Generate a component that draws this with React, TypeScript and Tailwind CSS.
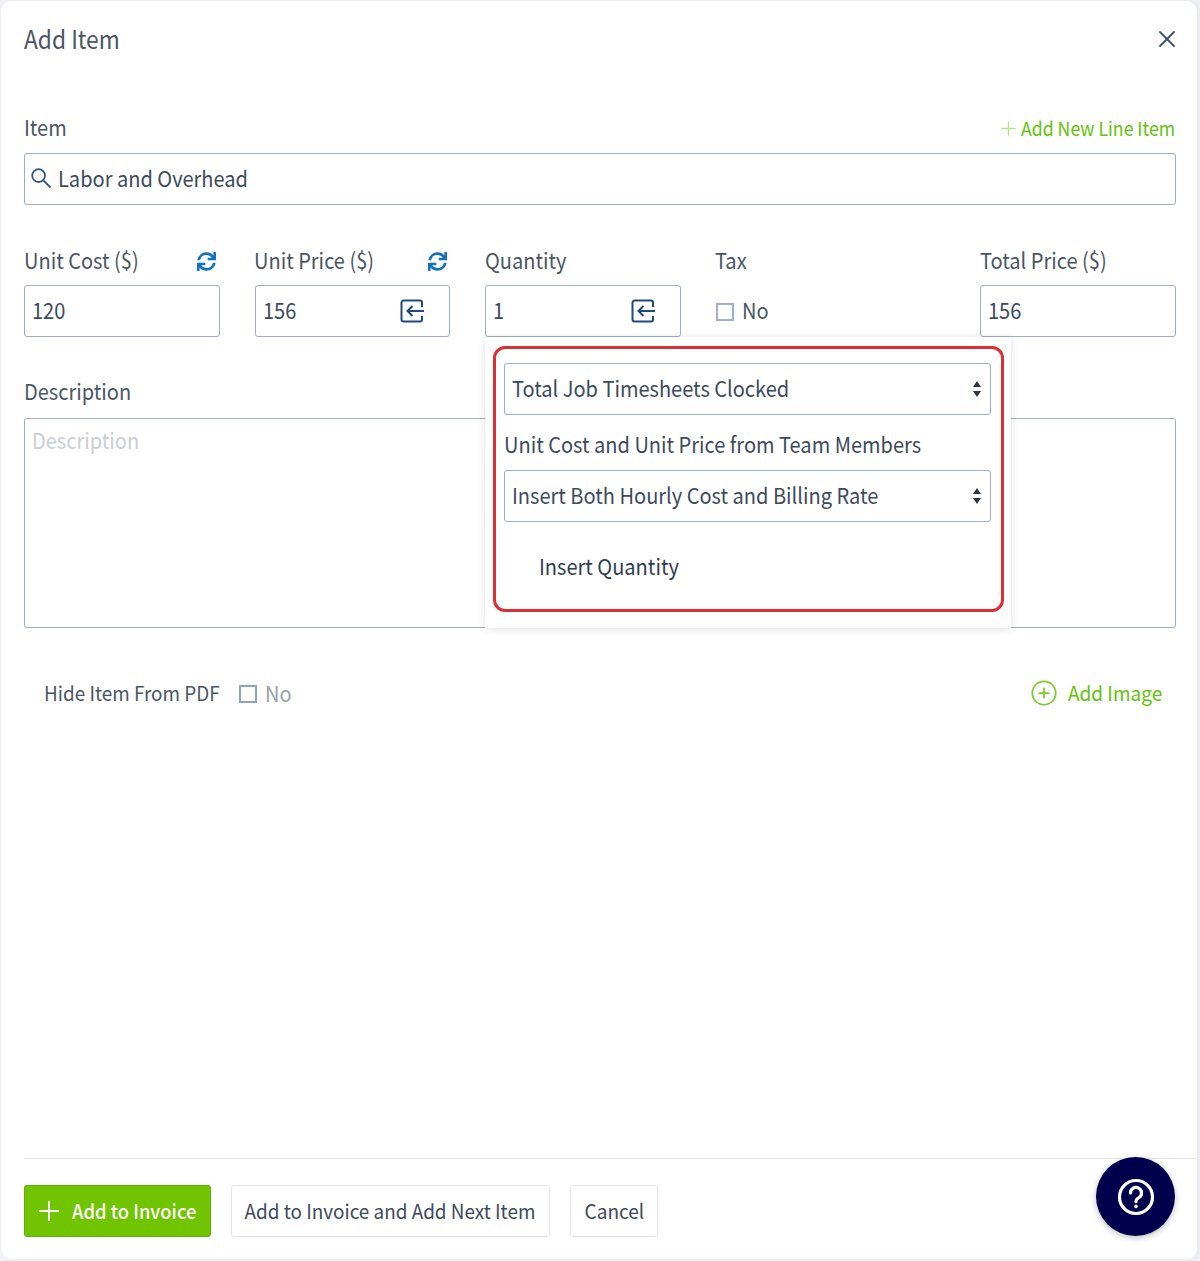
import { X, Plus, CirclePlus } from "lucide-react";
import { FaSync } from "react-icons/fa";

const font = "font-['Noto_Sans_CJK_SC','Noto_Sans',sans-serif]";
const squeeze = "inline-block origin-left whitespace-nowrap scale-x-[0.91] -translate-y-[2px]";

function ImportIcon() {
  return (
    <svg width="24" height="24" viewBox="0 0 24 24" fill="none" stroke="#1f4a7c" strokeWidth="2" className="shrink-0">
      <path d="M22 8V3.5A2 2 0 0 0 20 1.5H3.5A2 2 0 0 0 1.5 3.5v17a2 2 0 0 0 2 2H20a2 2 0 0 0 2-2V17" />
      <path d="M24 12H7.5M12.5 7l-5 5 5 5" />
    </svg>
  );
}

function SearchIcon() {
  return (
    <svg width="20" height="20" viewBox="0 0 20 20" fill="none" stroke="#2f5688" strokeWidth="1.8" strokeLinecap="round" className="mt-[-3px] shrink-0">
      <circle cx="7.6" cy="7.6" r="6.4" />
      <path d="M12.4 12.4l6.6 6.6" />
    </svg>
  );
}

function SelectArrows() {
  return (
    <svg width="10" height="18" viewBox="0 0 10 18" className="shrink-0" fill="#2a3444">
      <path d="M5 1l4 6H1zM5 17l-4-6h8z" />
    </svg>
  );
}

function Field({ label, value, sync, icon }: { label: string; value: string; sync?: boolean; icon?: boolean }) {
  return (
    <div className="w-[195.5px]">
      <div className="flex h-[24px] items-center justify-between pr-[3.5px]">
        <span className={`${squeeze} -ml-[0.5px] text-[22px] leading-[24px] text-[#4b5563]`}>{label}</span>
        {sync && <FaSync size={19} color="#1273bd" />}
      </div>
      <div className="mt-[12px] flex h-[52px] items-center justify-between rounded-[3px] border border-[#9fadc6] pl-[7px] pr-[25px]">
        <span className={`${squeeze} text-[22px] text-[#3d4a5c]`}>{value}</span>
        {icon && <ImportIcon />}
      </div>
    </div>
  );
}

function SelectBox({ text }: { text: string }) {
  return (
    <div className="flex h-[52px] items-center justify-between rounded-[3px] border border-[#9fadc6] pl-[7px] pr-[8px]">
      <span className={`${squeeze} text-[22px] text-[#3d4a5c]`}>{text}</span>
      <SelectArrows />
    </div>
  );
}

export default function App() {
  return (
    <div className={`${font} h-[1261px] w-[1200px] overflow-hidden bg-[#f2f3f8] pl-px pt-px`}>
      <div className="relative flex h-[1258px] w-[1196px] flex-col rounded-[10px] bg-white pl-[23px] shadow-[2px_0_6px_rgba(0,0,0,0.06)]">
        <div className="flex items-start justify-between pr-[16.5px] pt-[20px]">
          <h1 className="inline-block origin-left scale-x-[0.91] whitespace-nowrap text-[25px] font-normal leading-[34px] text-[#4b5563]">Add Item</h1>
          <X size={28} color="#3f5675" strokeWidth={1.6} className="mt-[3.5px]" />
        </div>

        <div className="mr-[22px] mt-[58px] flex items-center justify-between">
          <span className={`${squeeze} -ml-[0.5px] text-[22px] leading-[30px] text-[#4b5563]`}>Item</span>
          <span className="flex items-center gap-[1px] text-[19px] leading-[30px] text-[#63c20a]">
            <Plus size={23} color="#b5e28d" strokeWidth={1.4} />
            <span className="inline-block w-[154px] origin-left scale-x-[0.93] whitespace-nowrap">Add New Line Item</span>
          </span>
        </div>

        <div className="mr-[21.5px] mt-[10px] flex h-[52px] items-center gap-[7px] rounded-[3px] border border-[#9fadc6] pl-[6px]">
          <SearchIcon />
          <span className={`${squeeze} text-[22px] text-[#3d4a5c]`}>Labor and Overhead</span>
        </div>

        <div className="relative mr-[21px] mt-[44px] flex gap-[35px]">
          <Field label="Unit Cost ($)" value="120" sync />
          <Field label="Unit Price ($)" value="156" sync icon />
          <Field label="Quantity" value="1" icon />
          <div className="w-[229.5px]">
            <div className="h-[24px]">
              <span className={`${squeeze} -ml-[0.5px] text-[22px] leading-[24px] text-[#4b5563]`}>Tax</span>
            </div>
            <div className="mt-[12px] flex h-[52px] items-center gap-[8px]">
              <span className="mt-[2px] h-[18px] w-[18px] border-2 border-[#9fb0cc]" />
              <span className={`${squeeze} text-[22px] text-[#4b5563]`}>No</span>
            </div>
          </div>
          <Field label="Total Price ($)" value="156" />

          <div className="absolute left-[461px] top-[88px] z-10 h-[291px] w-[526px] bg-white pb-[10px] pl-[8px] pr-[7px] pt-[9px] shadow-[0_1px_8px_rgba(0,0,0,0.12)]">
            <div className="h-[266px] rounded-[12px] border-[3px] border-[#dc2f34] pl-[8px] pr-[10px] pt-[14px]">
              <SelectBox text="Total Job Timesheets Clocked" />
              <div className={`${squeeze} mt-[15px] text-[22px] leading-[30px] text-[#3d4a5c]`}>Unit Cost and Unit Price from Team Members</div>
              <div className="mt-[10px]">
                <SelectBox text="Insert Both Hourly Cost and Billing Rate" />
              </div>
              <div className={`${squeeze} ml-[35px] mt-[30px] text-[22px] leading-[30px] text-[#2f3d50]`}>Insert Quantity</div>
            </div>
          </div>
        </div>

        <div className={`${squeeze} -ml-[0.5px] mt-[43px] h-[24px] text-[22px] leading-[24px] text-[#4b5563]`}>Description</div>
        <div className="mr-[21.5px] mt-[14px] h-[210px] rounded-[3px] border border-[#9fadc6] px-[7px] pt-[5px] text-[22px] leading-[34px] text-[#c9ced6]">
          <span className={squeeze}>Description</span>
        </div>

        <div className="mr-[35px] mt-[51px] flex h-[32px] items-center justify-between pl-[20px]">
          <div className="flex items-center">
            <span className="inline-block w-[195px] origin-left -translate-y-[2px] scale-x-[0.945] whitespace-nowrap text-[20px] text-[#4b5563]">Hide Item From PDF</span>
            <span className="flex items-center gap-[8px]">
              <span className="-mt-[2px] h-[18px] w-[18px] border-2 border-[#8ea3c4]" />
              <span className="inline-block origin-left -translate-y-[3px] scale-x-[0.91] whitespace-nowrap text-[22px] text-[#9aa1aa]">No</span>
            </span>
          </div>
          <span className="flex items-center gap-[10px] text-[20px] text-[#63c20a]">
            <CirclePlus size={28} color="#7acb2c" strokeWidth={1.5} className="mt-[-4px]" />
            <span className="inline-block w-[94px] origin-left -translate-y-[2px] scale-x-[0.95] whitespace-nowrap">Add Image</span>
          </span>
        </div>

        <div className="mt-auto border-t border-[#e6e8ec] pb-[22px] pt-[26px]">
          <div className="flex gap-[20px]">
            <button className="flex h-[52px] w-[186.5px] items-center gap-[7px] rounded-[3px] border border-[#5fae00] bg-[#70c400] pl-[8px] text-[20px] font-medium text-white">
              <Plus size={32} color="#fff" strokeWidth={1.5} />
              <span className="inline-block origin-left scale-x-[0.92] whitespace-nowrap">Add to Invoice</span>
            </button>
            <button className="h-[52px] w-[319.5px] whitespace-nowrap rounded-[3px] border border-[#e4e6eb] bg-white text-[20px] text-[#3d4a5c]">
              <span className="inline-block scale-x-[0.945]">Add to Invoice and Add Next Item</span>
            </button>
            <button className="h-[52px] w-[88px] rounded-[3px] border border-[#e4e6eb] bg-white text-[20px] text-[#3d4a5c]">
              <span className="inline-block scale-x-[0.95]">Cancel</span>
            </button>
          </div>
        </div>

        <div className="absolute left-[1095px] top-[1156px] z-10 flex h-[79px] w-[79px] items-center justify-center rounded-full bg-[#00004d] shadow-[0_2px_6px_rgba(0,0,0,0.25)]">
          <svg width="38" height="38" viewBox="0 0 38 38" fill="none" stroke="#fff" strokeWidth="3.2" strokeLinecap="round">
            <circle cx="19" cy="19" r="16.5" />
            <path d="M13.5 15a5.5 5.5 0 1 1 8.3 4.7c-1.8 1.1-2.8 2-2.8 4" />
            <path d="M19 28.2v.2" strokeWidth="3.6" />
          </svg>
        </div>
      </div>
    </div>
  );
}
